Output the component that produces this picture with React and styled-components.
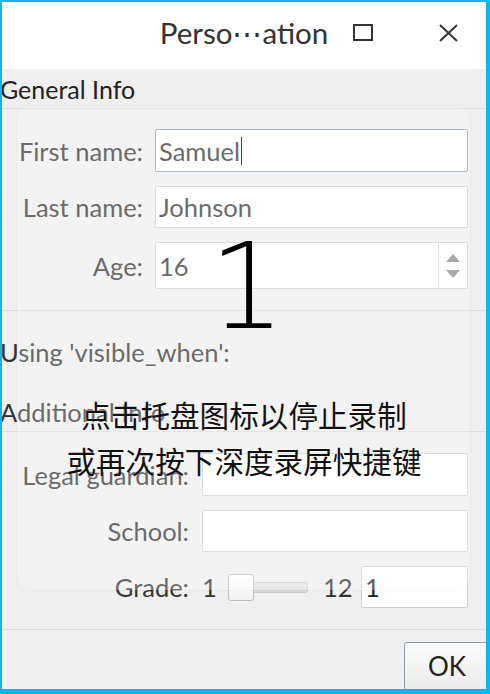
import React from "react";
import styled, { createGlobalStyle } from "styled-components";

const GlobalStyle = createGlobalStyle`
  html, body {
    margin: 0;
    padding: 0;
    background: #efefef;
  }
  body {
    font-family: Lato, "Noto Sans", "Liberation Sans", sans-serif;
  }
`;

const Frame = styled.div`
  position: relative;
  width: 490px;
  height: 694px;
  box-sizing: border-box;
  border-style: solid;
  border-color: #12b3ef;
  border-width: 2px 4px 5px 2px;
  background: #efefef;
  overflow: hidden;
  display: flex;
  flex-direction: column;
`;

const TitleBar = styled.div`
  height: 67px;
  flex: none;
  background: #fff;
  display: grid;
  grid-template-columns: 1fr auto 1fr;
  align-items: center;
`;

const Title = styled.div`
  font-size: 29.5px;
  color: #333;
  padding-bottom: 6px;
`;

const WindowButtons = styled.div`
  display: flex;
  justify-content: space-between;
  align-items: center;
  padding: 0 28px 6px 25px;
`;

const GroupTitle = styled.div`
  height: 39px;
  flex: none;
  display: flex;
  align-items: center;
  font-size: 25px;
  color: #222;
  border-bottom: 1px solid #dcdcdc;
  margin-left: -2px;
`;

const Note = styled.div`
  height: ${(p) => p.h}px;
  flex: none;
  display: flex;
  align-items: center;
  font-size: 25.5px;
  color: #333;
  margin-left: -2px;
  border-bottom: ${(p) => (p.line ? "1px solid #dcdcdc" : "none")};
  box-sizing: border-box;
`;

const Form = styled.div`
  flex: none;
  display: grid;
  grid-template-columns: ${(p) => p.labelWidth}px 1fr;
  column-gap: ${(p) => p.gap}px;
  row-gap: 14px;
  align-items: center;
  padding: ${(p) => p.top}px 18px 21px 0;
  border-bottom: 1px solid #dcdcdc;
`;

const Label = styled.label`
  font-size: 25.5px;
  color: #333;
  text-align: right;
  white-space: nowrap;
`;

const Field = styled.div`
  position: relative;
  height: ${(p) => p.h || 43}px;
  box-sizing: border-box;
  background: #fff;
  border: 1px solid ${(p) => (p.focused ? "#78a3d3" : "#cfcfcf")};
  border-radius: 2px;
  display: flex;
  align-items: center;
  font-size: 25.5px;
  color: #333;
  padding-left: 3px;
`;

const Caret = styled.span`
  display: inline-block;
  width: 1px;
  height: 28px;
  background: #000;
  margin-left: 1px;
`;

const FieldText = styled.span`
  flex: 1;
`;

const SpinButtons = styled.div`
  width: 28px;
  align-self: stretch;
  border-left: 1px solid #d6d6d6;
  display: flex;
  flex-direction: column;
  align-items: center;
  justify-content: center;
  gap: 8px;
`;

const Arrow = styled.div`
  width: 0;
  height: 0;
  border-left: 7px solid transparent;
  border-right: 7px solid transparent;
  border-${(p) => (p.up ? "bottom" : "top")}: 8px solid #8a8a8a;
`;

const GradeRow = styled.div`
  display: flex;
  align-items: center;
  font-size: 25.5px;
  color: #333;
`;

const SliderValue = styled.span`
  width: ${(p) => p.w}px;
  flex: none;
`;

const Slider = styled.div`
  width: 80px;
  height: 27px;
  flex: none;
  display: flex;
  align-items: center;
  margin-right: 15px;
`;

const Handle = styled.div`
  width: 26px;
  height: 27px;
  box-sizing: border-box;
  background: linear-gradient(#ffffff, #f3f3f3);
  border: 1px solid #bdbdbd;
  border-radius: 3px;
  flex: none;
`;

const Groove = styled.div`
  flex: 1;
  height: 11px;
  box-sizing: border-box;
  background: linear-gradient(#e6e6e6, #d8d8d8);
  border: 1px solid #cbcbcb;
  border-left: none;
  border-radius: 0 3px 3px 0;
`;

const GradeInput = styled(Field)`
  flex: 1;
  height: 42px;
  color: #222;
`;

const Footer = styled.div`
  flex: 1;
  display: flex;
  justify-content: flex-end;
  padding-top: 12px;
`;

const Button = styled.button`
  width: 90px;
  height: 48px;
  margin-right: -8px;
  box-sizing: border-box;
  border: 1px solid #8c9cae;
  border-radius: 3px;
  background: linear-gradient(#fbfbfb, #ececec);
  font-family: inherit;
  font-size: 26px;
  color: #222;
  padding: 0 4px 0 0;
  text-align: center;
`;

const Veil = styled.div`
  position: absolute;
  left: 15px;
  top: 104px;
  width: 453px;
  height: 484px;
  border-radius: 14px;
  background: rgba(255, 255, 255, 0.27);
  box-shadow: 0 0 0 1px rgba(0, 0, 0, 0.025);
  pointer-events: none;
`;

const Countdown = styled.div`
  position: absolute;
  left: 207px;
  top: 225px;
  font-family: "DejaVu Sans", sans-serif;
  font-weight: 200;
  font-size: 120px;
  line-height: 1;
  color: #000;
  pointer-events: none;
`;

const Hint = styled.div`
  position: absolute;
  left: 0;
  right: 0;
  top: 390px;
  text-align: center;
  font-family: "Noto Sans CJK SC", sans-serif;
  font-size: 29.6px;
  line-height: 46px;
  color: #111;
  text-shadow: 0 0 2px rgba(255, 255, 255, 0.6);
  pointer-events: none;
`;

function App() {
  return (
    <>
      <GlobalStyle />
      <Frame>
        <TitleBar>
          <div />
          <Title>Perso⋯ation</Title>
          <WindowButtons>
            <svg width="20" height="17" viewBox="0 0 20 17">
              <rect x="1" y="1" width="18" height="15" fill="none" stroke="#333" strokeWidth="2" />
            </svg>
            <svg width="19" height="18" viewBox="0 0 19 18">
              <path d="M1 1 L18 17 M18 1 L1 17" stroke="#333" strokeWidth="2" fill="none" />
            </svg>
          </WindowButtons>
        </TitleBar>

        <GroupTitle>General Info</GroupTitle>

        <Form labelWidth={141} gap={12} top={20}>
          <Label>First name:</Label>
          <Field focused>
            <span>Samuel</span>
            <Caret />
          </Field>
          <Label>Last name:</Label>
          <Field h={42}>Johnson</Field>
          <Label>Age:</Label>
          <Field h={47}>
            <FieldText>16</FieldText>
            <SpinButtons>
              <Arrow up />
              <Arrow />
            </SpinButtons>
          </Field>
        </Form>

        <Note h={82}>Using 'visible_when':</Note>
        <Note h={39} line>Additional Info</Note>

        <Form labelWidth={187} gap={13} top={21}>
          <Label>Legal guardian:</Label>
          <Field />
          <Label>School:</Label>
          <Field h={42} />
          <Label>Grade:</Label>
          <GradeRow>
            <SliderValue w={26}>1</SliderValue>
            <Slider>
              <Handle />
              <Groove />
            </Slider>
            <SliderValue w={38}>12</SliderValue>
            <GradeInput>1</GradeInput>
          </GradeRow>
        </Form>

        <Footer>
          <Button>OK</Button>
        </Footer>

        <Veil />
        <Countdown>1</Countdown>
        <Hint>
          点击托盘图标以停止录制
          <br />
          或再次按下深度录屏快捷键
        </Hint>
      </Frame>
    </>
  );
}

export default App;
